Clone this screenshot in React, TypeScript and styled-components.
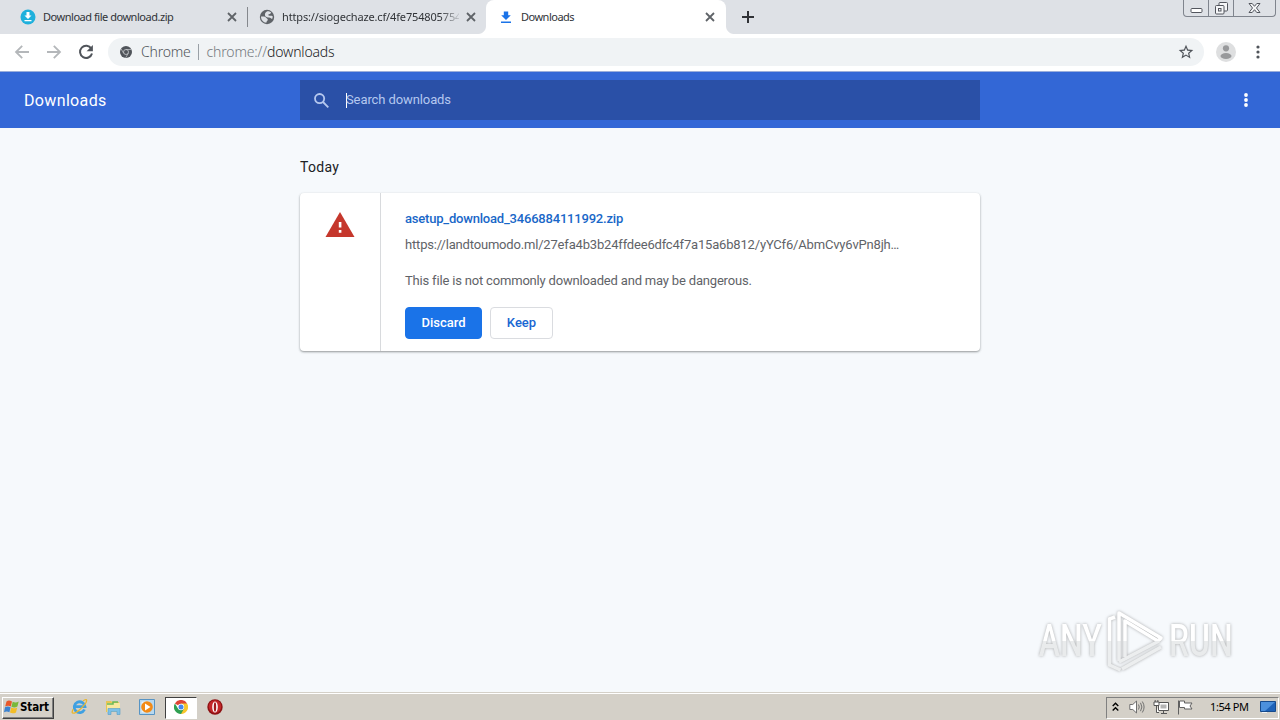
import React from 'react';
import styled, { createGlobalStyle } from 'styled-components';

const uiFont = '"Noto Sans", "Open Sans", sans-serif';
const pageFont = 'Roboto, "Liberation Sans", sans-serif';
const frameColor = '#dee1e6';
const taskbarColor = '#d4d0c8';

const GlobalStyle = createGlobalStyle`
  * {
    box-sizing: border-box;
  }
  body {
    margin: 0;
    overflow: hidden;
    background: #f6f9fc;
  }
  svg {
    display: block;
    flex: none;
  }
`;

const Screen = styled.div`
  display: flex;
  flex-direction: column;
  width: 1280px;
  height: 720px;
  font-family: ${pageFont};
`;

const Label = styled.span<{ $spacing?: number }>`
  letter-spacing: ${(props) => props.$spacing || 0}px;
  white-space: nowrap;
`;

/* Tab strip */

const TabStrip = styled.div`
  display: flex;
  height: 34px;
  padding-left: 8px;
  background: ${frameColor};
  font-family: ${uiFont};
  font-size: 11px;
  color: #303337;
`;

const Tab = styled.div<{ $active?: boolean }>`
  position: relative;
  display: flex;
  align-items: center;
  gap: 7px;
  width: ${(props) => (props.$active ? 240 : 239)}px;
  padding: 0 ${(props) => (props.$active ? 11 : 10)}px 0 12px;
  border-radius: 8px 8px 0 0;
  background: ${(props) => (props.$active ? '#fff' : 'transparent')};

  &::before,
  &::after {
    content: '';
    display: ${(props) => (props.$active ? 'block' : 'none')};
    position: absolute;
    bottom: 0;
    width: 8px;
    height: 8px;
  }
  &::before {
    left: -8px;
    background: radial-gradient(circle at 0 0, transparent 7.5px, #fff 8.5px);
  }
  &::after {
    right: -8px;
    background: radial-gradient(circle at 100% 0, transparent 7.5px, #fff 8.5px);
  }
`;

const TabDivider = styled.div`
  width: 1px;
  height: 20px;
  margin: 7px -1px 0 0;
  background: #85888d;
`;

const TabTitle = styled.div<{ $fade?: boolean }>`
  flex: 1;
  overflow: hidden;
  line-height: 20px;
  white-space: nowrap;
  mask-image: ${(props) =>
    props.$fade ? 'linear-gradient(to right, #000 158px, transparent 180px)' : 'none'};
`;

const NewTab = styled.div`
  display: flex;
  align-items: center;
  padding-left: 16px;
`;

const WindowButtons = styled.div`
  display: flex;
  width: 93px;
  height: 17px;
  margin: 0 4px 0 auto;
  border: 1px solid #7f848d;
  border-top: 0;
  border-radius: 0 0 4px 4px;
`;

const WindowButton = styled.div<{ $width: number }>`
  display: flex;
  justify-content: center;
  width: ${(props) => props.$width}px;

  & + & {
    border-left: 1px solid #7f848d;
  }
`;

/* Address bar */

const Toolbar = styled.div`
  display: flex;
  align-items: center;
  height: 37px;
  padding: 0 14px 1px;
  background: #fff;
`;

const NavIcons = styled.div`
  display: flex;
  gap: 16px;
  width: 94px;
`;

const Omnibox = styled.div`
  display: flex;
  align-items: center;
  width: 1096px;
  height: 28px;
  padding: 0 10px 0 12px;
  border-radius: 14px;
  background: #f0f3f5;
  font-family: ${uiFont};
  font-size: 14px;
  font-weight: 300;
  color: #50555a;
`;

const OmniboxText = styled.div`
  display: flex;
  flex: 1;
  align-items: center;
  margin-left: 9px;
  line-height: 20px;
`;

const OmniboxDivider = styled.div`
  width: 1px;
  height: 16px;
  margin: 0 8px 0 7px;
  background: #9aa0a6;
`;

const Scheme = styled.span`
  color: #74797e;
`;

const Host = styled.span`
  color: #202124;
`;

const Avatar = styled.div`
  margin: 0 20px 0 12px;
`;

/* Downloads page */

const PageHeader = styled.header`
  display: flex;
  align-items: center;
  height: 57px;
  padding-right: 24px;
  border-top: 1px solid #9aaedb;
  background: #3367d6;
  color: #fff;
`;

const PageTitle = styled.h1`
  width: 300px;
  margin: 0;
  padding: 2px 0 0 24px;
  font-size: 16px;
  font-weight: 400;
  line-height: 24px;
`;

const SearchField = styled.div`
  display: flex;
  align-items: center;
  width: 680px;
  height: 40px;
  padding-left: 14px;
  background: #2a50a7;
  font-size: 13px;
  line-height: 18px;
  color: #b5c8ef;
`;

const Caret = styled.div`
  width: 1px;
  height: 15px;
  margin: 1px -1px 0 17px;
  background: #fff;
`;

const HeaderMenu = styled.div`
  margin-left: auto;
`;

const Content = styled.main`
  position: relative;
  display: flex;
  flex: 1;
  flex-direction: column;
  align-items: center;
  background: #f6f9fc;
`;

const DateHeading = styled.h2`
  width: 680px;
  margin: 29px 0 16px;
  font-size: 14px;
  font-weight: 400;
  line-height: 20px;
  color: #202124;
`;

const Card = styled.section`
  display: flex;
  width: 680px;
  height: 158px;
  border-radius: 4px;
  background: #fff;
  box-shadow: 0 1px 2px rgba(60, 64, 67, 0.4), 0 1px 3px rgba(60, 64, 67, 0.18);
`;

const CardIcon = styled.div`
  display: flex;
  justify-content: center;
  width: 81px;
  padding-top: 19px;
  border-right: 1px solid #d8dadd;
`;

const CardBody = styled.div`
  flex: 1;
  padding: 16px 24px 0;
  font-size: 13px;
  line-height: 20px;
  color: #5f6368;
`;

const FileName = styled.div`
  font-weight: 500;
  color: #1967c8;
`;

const FileUrl = styled.div`
  margin-top: 6px;
`;

const Warning = styled.div`
  margin-top: 16px;
`;

const Actions = styled.div`
  display: flex;
  gap: 8px;
  margin-top: 16px;
`;

const Button = styled.button<{ $primary?: boolean; $width: number }>`
  width: ${(props) => props.$width}px;
  height: 32px;
  padding: 0 0 2px;
  border: 1px solid ${(props) => (props.$primary ? '#1a73e8' : '#dadce0')};
  border-radius: 4px;
  background: ${(props) => (props.$primary ? '#1a73e8' : '#fff')};
  color: ${(props) => (props.$primary ? '#fff' : '#1967d2')};
  font-family: ${pageFont};
  font-size: 13px;
  font-weight: 500;
`;

const Watermark = styled.div`
  position: absolute;
  right: 45px;
  bottom: 19px;
  display: flex;
  align-items: center;
  gap: 2px;
  filter: drop-shadow(0 0 1.5px rgba(90, 90, 90, 0.5));
`;

const WatermarkWord = styled.span<{ $width: number }>`
  display: flex;
  justify-content: center;
  width: ${(props) => props.$width}px;
  font-size: 45px;
  font-weight: 500;
  line-height: 64px;

  span {
    background: linear-gradient(#fff 50%, #e9ebec 50%);
    background-clip: text;
    color: transparent;
    transform: scaleX(0.71);
  }
`;

/* Taskbar */

const Taskbar = styled.footer`
  display: flex;
  align-items: center;
  height: 28px;
  padding: 3px 1px 1px 2px;
  border-top: 1px solid ${taskbarColor};
  box-shadow: inset 0 1px 0 #fff;
  background: ${taskbarColor};
  font-family: ${uiFont};
  color: #000;
`;

const StartButton = styled.div`
  display: flex;
  align-items: center;
  width: 52px;
  height: 22px;
  padding: 0 0 2px 1px;
  border: 1px solid;
  border-color: #fff #404040 #404040 #fff;
  box-shadow: inset -1px -1px 0 #808080;
  font-family: "DejaVu Sans Condensed", sans-serif;
  font-size: 11.5px;
  font-weight: 700;
`;

const Launcher = styled.div<{ $active?: boolean }>`
  display: flex;
  align-items: center;
  justify-content: center;
  width: ${(props) => (props.$active ? 32 : 34)}px;
  height: 22px;
  margin: 0 ${(props) => (props.$active ? 1 : 0)}px;
  padding-bottom: 2px;
  border: 1px solid transparent;
  border-color: ${(props) => (props.$active ? '#404040 #fff #fff #404040' : 'transparent')};
  background: ${(props) => (props.$active ? '#fff' : 'transparent')};
`;

const Launchers = styled.div`
  display: flex;
  margin-left: 8px;
`;

const Tray = styled.div`
  display: flex;
  align-items: center;
  width: 173px;
  height: 22px;
  margin-left: auto;
  padding: 0 0 2px 5px;
  border: 1px solid;
  border-color: #808080 #fff #fff #808080;
  font-size: 11px;
`;

const TrayIcon = styled.div<{ $gap: number }>`
  margin-left: ${(props) => props.$gap}px;
`;

const Clock = styled.div`
  width: 40px;
  margin-left: 16px;
  white-space: nowrap;
`;

function CloseIcon() {
  return (
    <svg width="10" height="10" viewBox="0 0 10 10" stroke="#5f6368" strokeWidth="1.8">
      <path d="M1 1l8 8M9 1L1 9" />
    </svg>
  );
}

function DownloadBadge() {
  return (
    <svg width="16" height="16" viewBox="0 0 16 16">
      <circle cx="8" cy="8" r="7.5" fill="#1fb0dc" />
      <path d="M6.5 3h3v3.5h2L8 10 4.500 6.500h2zM4.500 11h7v1.300h-7z" fill="#fff" />
    </svg>
  );
}

function GlobeIcon() {
  return (
    <svg width="16" height="16" viewBox="0 0 16 16">
      <circle cx="8" cy="8" r="7.2" fill="#5f6368" />
      <path
        d="M2 7.500c2.500-.3 4.500 0 5.200 1.200.5.900 1.800.9 1.600 2.300-.2 1-1.300 1-1.500 2.800C4.300 13.500 2 11 2 7.500zM7.500 2.800c1.600-.9 3.500-.4 4.700 1-.8.500-1 1.500-2.200 1.500-.9 0-1 1-.2 1.300 1 .4 2.800-.2 4 .9-.1.900-.3 1.700-.7 2.400-1.500-.2-1.600-1.200-3-1.300-1.500-.1-3.800-.8-4.100-2.200-.2-1.200.2-3 1.500-3.600z"
        fill="#dee1e6"
      />
    </svg>
  );
}

function ArrowDownload() {
  return (
    <svg width="16" height="16" viewBox="0 0 16 16" fill="#1a73e8">
      <path d="M5.800 2.500h4.400v3.700h2.600L8 11 3.200 6.200h2.600zM3 12.500h10V14H3z" />
    </svg>
  );
}

function ArrowIcon(props: { flip?: boolean }) {
  return (
    <svg
      width="16"
      height="16"
      viewBox="0 0 16 16"
      fill="none"
      stroke="#b4b7ba"
      strokeWidth="1.8"
      transform={props.flip ? 'scale(-1 1)' : undefined}
    >
      <path d="M15 8H2.500M8.200 1.800L2 8l6.200 6.200" />
    </svg>
  );
}

function ReloadIcon() {
  return (
    <svg width="16" height="16" viewBox="0 0 16 16">
      <path d="M13.300 4.600A6.100 6.100 0 1 0 14 9.500" fill="none" stroke="#50545a" strokeWidth="2" />
      <path d="M14.900 1v6.300H8.600z" fill="#50545a" />
    </svg>
  );
}

function ChromeMono() {
  return (
    <svg width="12" height="12" viewBox="0 0 12 12">
      <circle cx="6" cy="6" r="6" fill="#50545a" />
      <circle cx="6" cy="6" r="2.500" fill="none" stroke="#c9cccf" strokeWidth="0.8" />
      <path d="M6 3.500h5.300M3.700 7.300L1.200 3M8.300 7.300L5.700 11.700" stroke="#c9cccf" strokeWidth="0.700" />
    </svg>
  );
}

function StarIcon() {
  return (
    <svg width="16" height="16" viewBox="1 1 22 22" fill="#50545a">
      <path d="M22 9.240l-7.190-.62L12 2 9.190 8.630 2 9.240l5.460 4.730L5.820 21 12 17.270 18.180 21l-1.630-7.030L22 9.240zM12 15.400l-3.760 2.270 1-4.280-3.320-2.880 4.380-.38L12 6.100l1.710 4.040 4.380.38-3.320 2.880 1 4.280L12 15.400z" />
    </svg>
  );
}

function AvatarIcon() {
  return (
    <svg width="20" height="20" viewBox="0 0 20 20">
      <circle cx="10" cy="10" r="10" fill="#dedfe0" />
      <circle cx="10" cy="6.300" r="3.100" fill="#98999b" />
      <ellipse cx="10" cy="14" rx="5.500" ry="3" fill="#98999b" />
    </svg>
  );
}

function DotsIcon(props: { color: string; radius: number }) {
  return (
    <svg width="4" height="16" viewBox="0 0 4 16" fill={props.color}>
      {[3, 8, 13].map((y) => (
        <circle key={y} cx="2" cy={y} r={props.radius} />
      ))}
    </svg>
  );
}

function SearchIcon() {
  return (
    <svg width="15" height="15" viewBox="0 0 15 15" fill="none" stroke="#b5c8ef" strokeWidth="1.8">
      <circle cx="5.600" cy="5.600" r="4.600" />
      <path d="M9 9l5.300 5.300" />
    </svg>
  );
}

function WarningIcon() {
  return (
    <svg width="30" height="26" viewBox="0 0 30 26">
      <path d="M15 0l14.500 25H.5z" fill="#c5372c" />
      <path d="M13.800 10h2.600v5.500h-2.600zM13.800 18h2.600v2.800h-2.600z" fill="#fff" />
    </svg>
  );
}

function PlayLogo() {
  return (
    <svg width="60" height="64" viewBox="0 0 60 64" fill="none" strokeLinejoin="round">
      <defs>
        <linearGradient id="logo" x1="0" y1="0" x2="0" y2="64" gradientUnits="userSpaceOnUse">
          <stop offset="0.5" stopColor="#fff" />
          <stop offset="0.5" stopColor="#eceeef" />
        </linearGradient>
      </defs>
      <g stroke="url(#logo)" strokeWidth="3.500">
        <path d="M10 8L4.500 10v46l11 5" />
        <path d="M14 52V4l42 25-3 3L20 12v36" />
        <path d="M14 53l40-21M17 60l39-22" />
      </g>
    </svg>
  );
}

function WindowsFlag() {
  return (
    <svg width="16" height="16" viewBox="0 0 16 16">
      <path d="M2.500 2.500C4.500 1 6 1.500 8 2.500L6.800 7.500C5 6.500 3.200 6.500 1.200 7.500z" fill="#e8582a" />
      <path d="M8.700 2.800c2 1 4 .9 6-.3l-1.300 5c-2 1.200-4 1.200-6 .3z" fill="#79b83a" />
      <path d="M1 8.300c2-1.100 3.800-1 5.600 0l-1.200 5C3.500 12.300 2 12.300 0 13.300z" fill="#3b82d0" />
      <path d="M7.200 8.600c2 1 4 .9 6-.2l-1.200 5c-2 1.200-4 1.200-6 .2z" fill="#f3bd27" />
    </svg>
  );
}

function ExplorerIcon() {
  return (
    <svg width="17" height="17" viewBox="0 0 17 17" fill="none">
      <path d="M13.500 11.500A5.400 5.400 0 1 1 14 8.700H4.500" stroke="#3fa0e2" strokeWidth="2.800" />
      <path d="M12 3c3-2.500 4.500-1.500 3 1.500C12.500 9 5 15.500 2 15.200c-1.400-.2-.8-2.200.3-4" stroke="#e9b62e" strokeWidth="1.300" />
    </svg>
  );
}

function FolderIcon() {
  return (
    <svg width="17" height="16" viewBox="0 0 17 16">
      <path d="M1 2h5l1 1h7v10H1z" fill="#e8c555" />
      <path d="M2 4h13v9H2z" fill="#f8e8a0" />
      <path d="M2 5h6V3h5" stroke="#69b957" strokeWidth="1.500" fill="none" />
      <path d="M3 15.500V9.500h12v6h-3v-3H6v3z" fill="#7cc0e8" stroke="#559bc6" strokeWidth="0.600" />
    </svg>
  );
}

function MediaIcon() {
  return (
    <svg width="16" height="16" viewBox="0 0 16 16">
      <path d="M.5.5h15v15H.5z" fill="#b7d8ef" stroke="#5794c4" />
      <path d="M2.500 2.500h8v11h-8z" fill="#e8f3fa" />
      <circle cx="8" cy="8" r="5.800" fill="#f28a16" />
      <path d="M6 4.500L11.500 8 6 11.500z" fill="#fff" />
    </svg>
  );
}

function ChromeIcon() {
  return (
    <svg width="14" height="14" viewBox="0 0 14 14">
      <path d="M7 7L.9 3.500A7 7 0 0 1 13.100 3.500z" fill="#df4435" />
      <path d="M7 7V3.500h6.100A7 7 0 0 1 7 14z" fill="#f8c62c" />
      <path d="M7 7l2.800 2L7 14A7 7 0 0 1 .9 3.500L4 8.500z" fill="#2fa052" />
      <circle cx="7" cy="7" r="3.200" fill="#fff" />
      <circle cx="7" cy="7" r="2.500" fill="#4587ee" />
    </svg>
  );
}

function OperaIcon() {
  return (
    <svg width="16" height="16" viewBox="0 0 16 16">
      <circle cx="8" cy="8" r="7.700" fill="#8e1113" />
      <circle cx="8" cy="7.500" r="6.300" fill="#c4272a" />
      <ellipse cx="8" cy="8" rx="2.800" ry="5.600" fill="#fff" />
      <ellipse cx="8" cy="8" rx="1.200" ry="4.800" fill="#a01a1c" />
    </svg>
  );
}

export default function App() {
  return (
    <Screen>
      <GlobalStyle />
      <TabStrip>
        <Tab>
          <DownloadBadge />
          <TabTitle>
            <Label $spacing={-0.47}>Download file download.zip</Label>
          </TabTitle>
          <CloseIcon />
        </Tab>
        <TabDivider />
        <Tab>
          <GlobeIcon />
          <TabTitle $fade>
            <Label $spacing={-0.15}>https://siogechaze.cf/4fe754805754</Label>
          </TabTitle>
          <CloseIcon />
        </Tab>
        <Tab $active>
          <ArrowDownload />
          <TabTitle>
            <Label $spacing={-0.5}>Downloads</Label>
          </TabTitle>
          <CloseIcon />
        </Tab>
        <NewTab>
          <svg width="12" height="12" viewBox="0 0 12 12" stroke="#303236" strokeWidth="2">
            <path d="M6 0v12M0 6h12" />
          </svg>
        </NewTab>
        <WindowButtons>
          <WindowButton $width={24}>
            <svg width="13" height="16" viewBox="0 0 13 16">
              <rect x="1" y="8.500" width="11" height="4" rx="1" fill="#fff" stroke="#53565e" />
            </svg>
          </WindowButton>
          <WindowButton $width={25}>
            <svg width="13" height="16" viewBox="0 0 13 16" fill="#f5f6f8" stroke="#53565e">
              <rect x="4" y="2.500" width="8.500" height="8.500" rx="1" />
              <rect x="0.500" y="5.500" width="8.500" height="8.500" rx="1" />
              <rect x="3.500" y="8.500" width="2.500" height="2.500" />
            </svg>
          </WindowButton>
          <WindowButton $width={42}>
            <svg width="13" height="16" viewBox="0 0 13 16">
              <path
                d="M1 3.500h3.200l2.300 2.800 2.300-2.800H12L8.500 8l3.500 4.500H8.800L6.500 9.700l-2.300 2.800H1L4.500 8z"
                fill="#f5f6f8"
                stroke="#53565e"
              />
            </svg>
          </WindowButton>
        </WindowButtons>
      </TabStrip>

      <Toolbar>
        <NavIcons>
          <ArrowIcon />
          <ArrowIcon flip />
          <ReloadIcon />
        </NavIcons>
        <Omnibox>
          <ChromeMono />
          <OmniboxText>
            <Label $spacing={-0.2}>Chrome</Label>
            <OmniboxDivider />
            <Label $spacing={-0.17}>
              <Scheme>chrome://</Scheme>
              <Host>downloads</Host>
            </Label>
          </OmniboxText>
          <StarIcon />
        </Omnibox>
        <Avatar>
          <AvatarIcon />
        </Avatar>
        <DotsIcon color="#50545a" radius={1.6} />
      </Toolbar>

      <PageHeader>
        <PageTitle>
          <Label $spacing={0.35}>Downloads</Label>
        </PageTitle>
        <SearchField>
          <SearchIcon />
          <Caret />
          <Label $spacing={-0.1}>Search downloads</Label>
        </SearchField>
        <HeaderMenu>
          <svg width="20" height="20" viewBox="0 0 20 20" fill="#fff">
            <circle cx="10" cy="5" r="1.900" />
            <circle cx="10" cy="10" r="1.900" />
            <circle cx="10" cy="15" r="1.900" />
          </svg>
        </HeaderMenu>
      </PageHeader>

      <Content>
        <DateHeading>
          <Label $spacing={0.3}>Today</Label>
        </DateHeading>
        <Card>
          <CardIcon>
            <WarningIcon />
          </CardIcon>
          <CardBody>
            <FileName>
              <Label $spacing={-0.2}>asetup_download_3466884111992.zip</Label>
            </FileName>
            <FileUrl>
              <Label $spacing={-0.18}>
                https://landtoumodo.ml/27efa4b3b24ffdee6dfc4f7a15a6b812/yYCf6/AbmCvy6vPn8jh…
              </Label>
            </FileUrl>
            <Warning>
              <Label $spacing={-0.18}>This file is not commonly downloaded and may be dangerous.</Label>
            </Warning>
            <Actions>
              <Button $primary $width={77}>
                <Label>Discard</Label>
              </Button>
              <Button $width={63}>
                <Label>Keep</Label>
              </Button>
            </Actions>
          </CardBody>
        </Card>
        <Watermark>
          <WatermarkWord $width={66}>
            <span>ANY</span>
          </WatermarkWord>
          <PlayLogo />
          <WatermarkWord $width={68}>
            <span>RUN</span>
          </WatermarkWord>
        </Watermark>
      </Content>

      <Taskbar>
        <StartButton>
          <WindowsFlag />
          <Label $spacing={-0.1}>Start</Label>
        </StartButton>
        <Launchers>
          <Launcher>
            <ExplorerIcon />
          </Launcher>
          <Launcher>
            <FolderIcon />
          </Launcher>
          <Launcher>
            <MediaIcon />
          </Launcher>
          <Launcher $active>
            <ChromeIcon />
          </Launcher>
          <Launcher>
            <OperaIcon />
          </Launcher>
        </Launchers>
        <Tray>
          <svg width="7" height="10" viewBox="0 0 7 10" fill="none" stroke="#000" strokeWidth="1.400">
            <path d="M.7 4l2.800-2.800L6.300 4M.7 8.500l2.800-2.800 2.800 2.800" />
          </svg>
          <TrayIcon $gap={10}>
            <svg width="16" height="16" viewBox="0 0 16 16" fill="#fff" stroke="#707070">
              <path d="M.8 5.500h3L7.500 2v12L3.800 10.500h-3z" />
              <path d="M9.500 5.500q1.500 2.500 0 5M11.500 3.800q2.800 4.200 0 8.400M13.300 2.500q3.600 5.500 0 11" fill="none" />
            </svg>
          </TrayIcon>
          <TrayIcon $gap={8}>
            <svg width="17" height="16" viewBox="0 0 17 16" fill="#fff" stroke="#555">
              <path d="M5.500 3.500h10v8h-10z" />
              <path d="M7.500 5.500h6v4h-6z" fill="#b4b4b4" stroke="none" />
              <path d="M8 14.500h6M10.500 12v2" />
              <path d="M1 3h5v3.500H1zM2.200 1v2M4.800 1v2M3.500 6.500v7H6" />
            </svg>
          </TrayIcon>
          <TrayIcon $gap={7}>
            <svg width="17" height="16" viewBox="0 0 17 16" fill="#fff" stroke="#606060">
              <path d="M1.500 1.500v14" />
              <path d="M2.500 2h5v2h7.500l-2 3 2 3H7.500V8.500h-5z" />
            </svg>
          </TrayIcon>
          <Clock>
            <Label $spacing={-0.4}>1:54 PM</Label>
          </Clock>
          <TrayIcon $gap={10}>
            <svg width="16" height="14" viewBox="0 0 16 14">
              <path d="M.5 1.500h15v10H.5z" fill="#1e62b8" stroke="#164a8c" />
              <path d="M1 2h14L5 11H1z" fill="#4c90dc" />
              <path d="M2 12.500h5" stroke="#f4f4f4" />
            </svg>
          </TrayIcon>
        </Tray>
      </Taskbar>
    </Screen>
  );
}
